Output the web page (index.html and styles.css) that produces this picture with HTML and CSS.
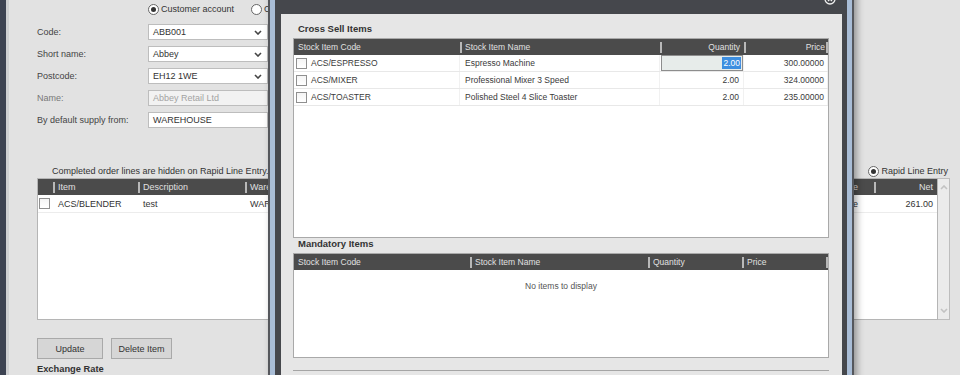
FILE: index.html
```html
<!DOCTYPE html>
<html lang="en">
    <head>
        <meta charset="utf-8">
        <title>Sales Order - Cross Sell Items</title>
        <link rel="stylesheet" href="styles.css">
    </head>
    <body>
        <div class="window"> <!-- the order screen behind the popup -->
            <div class="page">
                <div class="account-type">
                    <label class="option"><span class="radio on"></span>Customer account</label>
                    <label class="option"><span class="radio"></span>Cash account</label>
                </div>
                <div class="form">
                    <span class="label">Code:</span>
                    <div class="field">ABB001<svg class="chev" width="8" height="5" viewBox="0 0 8 5"><polyline points="1,1 4,4 7,1"/></svg></div>
                    <span class="label">Short name:</span>
                    <div class="field">Abbey<svg class="chev" width="8" height="5" viewBox="0 0 8 5"><polyline points="1,1 4,4 7,1"/></svg></div>
                    <span class="label">Postcode:</span>
                    <div class="field">EH12 1WE<svg class="chev" width="8" height="5" viewBox="0 0 8 5"><polyline points="1,1 4,4 7,1"/></svg></div>
                    <span class="label muted">Name:</span>
                    <div class="field disabled">Abbey Retail Ltd</div>
                    <span class="label">By default supply from:</span>
                    <div class="field">WAREHOUSE</div>
                </div>
                <div class="lines-bar">
                    <span>Completed order lines are hidden on Rapid Line Entry.</span>
                    <label class="option"><span class="radio on"></span>Rapid Line Entry</label>
                </div>
                <div class="order-grid">
                    <div class="order-table">
                        <div class="orow ohead">
                            <span class="cell"></span>
                            <span class="cell">Item</span>
                            <span class="cell">Description</span>
                            <span class="cell">Warehouse</span>
                            <span class="cell num type">Sale Type</span>
                            <span class="cell num">Net</span>
                        </div>
                        <div class="orow">
                            <span class="cell"><span class="check"></span></span>
                            <span class="cell">ACS/BLENDER</span>
                            <span class="cell">test</span>
                            <span class="cell">WAREHOUSE</span>
                            <span class="cell num type">Single</span>
                            <span class="cell num">261.00</span>
                        </div>
                    </div>
                    <div class="scrollbar">
                        <svg width="8" height="5" viewBox="0 0 8 5"><polyline points="1,4 4,1 7,4"/></svg>
                        <svg width="8" height="5" viewBox="0 0 8 5"><polyline points="1,1 4,4 7,1"/></svg>
                    </div>
                </div>
                <div class="buttons">
                    <button class="btn update">Update</button>
                    <button class="btn delete">Delete Item</button>
                </div>
                <div class="exchange">Exchange Rate</div>
            </div>

            <div class="dialog"> <!-- popup sits over the order screen -->
                <div class="dialog-frame">
                    <div class="dialog-title">
                        <svg class="close" width="12" height="12" viewBox="0 0 12 12"><circle cx="6" cy="6" r="5"/><path d="M4 4 L8 8 M8 4 L4 8"/></svg>
                    </div>
                    <div class="dialog-body">
                        <div class="section-title">Cross Sell Items</div>
                        <div class="xgrid cross">
                            <div class="xrow xhead">
                                <span class="cell">Stock Item Code</span>
                                <span class="cell">Stock Item Name</span>
                                <span class="cell num">Quantity</span>
                                <span class="cell num last">Price</span>
                            </div>
                            <div class="xrow">
                                <span class="cell"><span class="check"></span>ACS/ESPRESSO</span>
                                <span class="cell">Espresso Machine</span>
                                <span class="cell editing"><span class="edit"><span class="sel">2.00</span></span></span>
                                <span class="cell num">300.00000</span>
                            </div>
                            <div class="xrow">
                                <span class="cell"><span class="check"></span>ACS/MIXER</span>
                                <span class="cell">Professional Mixer 3 Speed</span>
                                <span class="cell num">2.00</span>
                                <span class="cell num">324.00000</span>
                            </div>
                            <div class="xrow">
                                <span class="cell"><span class="check"></span>ACS/TOASTER</span>
                                <span class="cell">Polished Steel 4 Slice Toaster</span>
                                <span class="cell num">2.00</span>
                                <span class="cell num">235.00000</span>
                            </div>
                        </div>
                        <div class="section-title">Mandatory Items</div>
                        <div class="xgrid mandatory">
                            <div class="xrow xhead">
                                <span class="cell">Stock Item Code</span>
                                <span class="cell">Stock Item Name</span>
                                <span class="cell">Quantity</span>
                                <span class="cell last">Price</span>
                            </div>
                            <div class="empty">No items to display</div>
                        </div>
                        <div class="dialog-foot"></div>
                    </div>
                </div>
            </div>
        </div>
    </body>
</html>
```

FILE: styles.css
```css
*{
    margin: 0;
    padding: 0;
    box-sizing: border-box;
}
body{
    width: 960px;
    height: 375px;
    overflow: hidden;
    font-family: "Liberation Sans", Arial, sans-serif;
    font-size: 9px;
    color: #333;
}
/* ---------- order screen ---------- */
.window{
    position: relative; /* the dialog is placed against this */
    height: 375px;
    overflow: hidden;
    background: #e2e2e2;
    border-left: 6px solid #3d4352;
    box-shadow: inset 3px 0 0 #cfd0d2;
}
.page{
    padding: 2px 10px 0 31px;
}
.account-type{
    display: flex;
    gap: 17px;
    height: 14px;
    align-items: center;
    padding-left: 111px;
}
.option{
    display: flex;
    align-items: center;
    gap: 2px;
    color: #333;
}
.radio{
    width: 11px;
    height: 11px;
    border: 1px solid #666;
    border-radius: 50%;
    background: #fff;
    display: flex;
    align-items: center;
    justify-content: center;
}
.radio.on::after{
    content: "";
    width: 5px;
    height: 5px;
    border-radius: 50%;
    background: #333;
}
.form{
    display: grid;
    grid-template-columns: 111px 120px;
    row-gap: 6px;
    align-items: center;
    margin-top: 8px;
}
.label{
    color: #444;
}
.label.muted{
    color: #777;
}
.field{
    height: 16px;
    background: #fff;
    border: 1px solid #bdbdbd;
    padding: 0 5px 0 4px;
    display: flex;
    align-items: center;
    justify-content: space-between;
    color: #333;
}
.field.disabled{
    background: #f2f2f2;
    color: #a3a3a3;
}
.chev polyline, .scrollbar polyline{
    fill: none;
    stroke: #444;
    stroke-width: 1.6;
}
.lines-bar{
    display: flex;
    justify-content: space-between;
    align-items: center;
    height: 12px;
    margin-top: 37px;
    padding: 0 2px 0 15px;
}
.order-grid{
    display: flex;
    height: 142px;
    margin-top: 1px;
}
.order-table{
    flex: 1;
    background: #fff;
    border: 1px solid #b5b5b5;
}
.orow{
    display: grid;
    grid-template-columns: 15px 85px 107px 1fr 94px 63px;
    height: 18px;
    border-bottom: 1px solid #ececec;
}
.orow.ohead{
    height: 16px;
    border-bottom: none;
}
.orow .cell.type{
    padding-right: 16px;
}
.scrollbar{
    width: 12px;
    border: 1px solid #bdbdbd;
    border-left: none;
    background: #ebebeb;
    display: flex;
    flex-direction: column;
    justify-content: space-between;
    align-items: center;
    padding: 6px 0;
}
.scrollbar polyline{
    stroke: #c2c2c2;
}
.buttons{
    display: flex;
    gap: 8px;
    margin-top: 18px;
}
.btn{
    height: 21px;
    background: #d6d6d6;
    border: 1px solid #a9a9a9;
    font: inherit;
    color: #333;
}
.btn.update{ width: 66px; }
.btn.delete{ width: 61px; }
.exchange{
    margin-top: 4px;
    font-weight: bold;
    font-size: 9.3px;
    line-height: 12px;
}
/* ---------- shared grid cells ---------- */
.cell{
    position: relative;
    display: flex;
    align-items: center;
    height: 100%;
    padding: 0 4px 0 5px;
    white-space: nowrap;
    overflow: hidden;
}
.cell.num{
    justify-content: flex-end;
}
.ohead, .xhead{
    background: #4b4b4b;
    color: #e0e0e0;
}
.ohead .cell + .cell::before, .xhead .cell + .cell::before, .xhead .last::after{
    content: ""; /* little column divider in the header */
    position: absolute;
    left: 0;
    top: 3px;
    bottom: 2px;
    width: 2px;
    background: #b8b8b8;
}
.xhead .last::after{
    left: auto;
    right: 0;
}
.orow .cell:first-child{ padding-left: 1px; }
.check{
    width: 11px;
    height: 11px;
    border: 1px solid #8f8f8f;
    background: linear-gradient(#f4f4f4, #fff);
    flex: none;
}
/* ---------- cross sell dialog ---------- */
.dialog{
    position: absolute;
    left: 262px;
    top: -10px;
    width: 586px;
    height: 400px;
    border: 2px solid #55575c;
    background: #a9bdd6;
    padding: 0 5px;
    box-shadow: 3px 0 7px rgba(0,0,0,0.35);
}
.dialog-frame{
    height: 100%;
    background: #45474c;
    padding: 0 5px 0 6px;
    display: flex;
    flex-direction: column;
}
.dialog-title{
    height: 22px;
    flex: none;
    display: flex;
    justify-content: flex-end;
    padding: 1px 6px 0 0;
}
.close circle, .close path{
    fill: none;
    stroke: #eee;
    stroke-width: 1.3;
}
.dialog-body{
    flex: 1;
    background: #e6e6e6;
    padding: 9px 13px 0 12px;
    font-size: 8.5px;
}
.section-title{
    font-weight: bold;
    font-size: 9.5px;
    line-height: 12px;
    padding-left: 5px;
    margin-bottom: 3px;
    color: #333;
}
.xgrid{
    background: #fff;
    border: 1px solid #a9a9a9;
}
.xgrid.cross{
    height: 200px;
}
.xgrid.mandatory{
    height: 105px;
    margin-top: 1px;
}
.xrow{
    display: grid;
    height: 17px;
    border-bottom: 1px solid #e8e8e8;
    color: #3a3a3a;
}
.cross .xrow{
    grid-template-columns: 166px 200px 84px 1fr;
}
.mandatory .xrow{
    grid-template-columns: 176px 178px 94px 1fr;
}
.xrow.xhead{
    height: 16px;
    border-bottom: none;
    color: #e0e0e0;
}
.cross .xrow:not(.xhead) .cell{
    border-right: 1px solid #f1f1f1;
}
.xrow .cell:first-child{
    padding-left: 4px;
}
.cross .xrow:not(.xhead) .cell:first-child{
    padding-left: 2px;
    gap: 4px;
}
.cross .cell.num{
    padding-right: 4px;
}
.cross .cell.num:last-child{
    padding-right: 3px;
}
.cell.editing{
    padding: 0 0 0 1px;
}
.edit{
    flex: 1;
    height: 100%;
    border: 1px solid #8d8d8d;
    background: #e7ecea;
    display: flex;
    align-items: center;
    justify-content: flex-end;
    padding-right: 1px;
}
.sel{
    background: #3d8ee0;
    color: #fff;
    padding: 1px 1px;
}
.empty{
    text-align: center;
    padding-top: 10px;
    line-height: 12px;
    color: #555;
}
.dialog-foot{
    margin-top: 12px;
    border-top: 1px solid #a5a5a5;
}
```
